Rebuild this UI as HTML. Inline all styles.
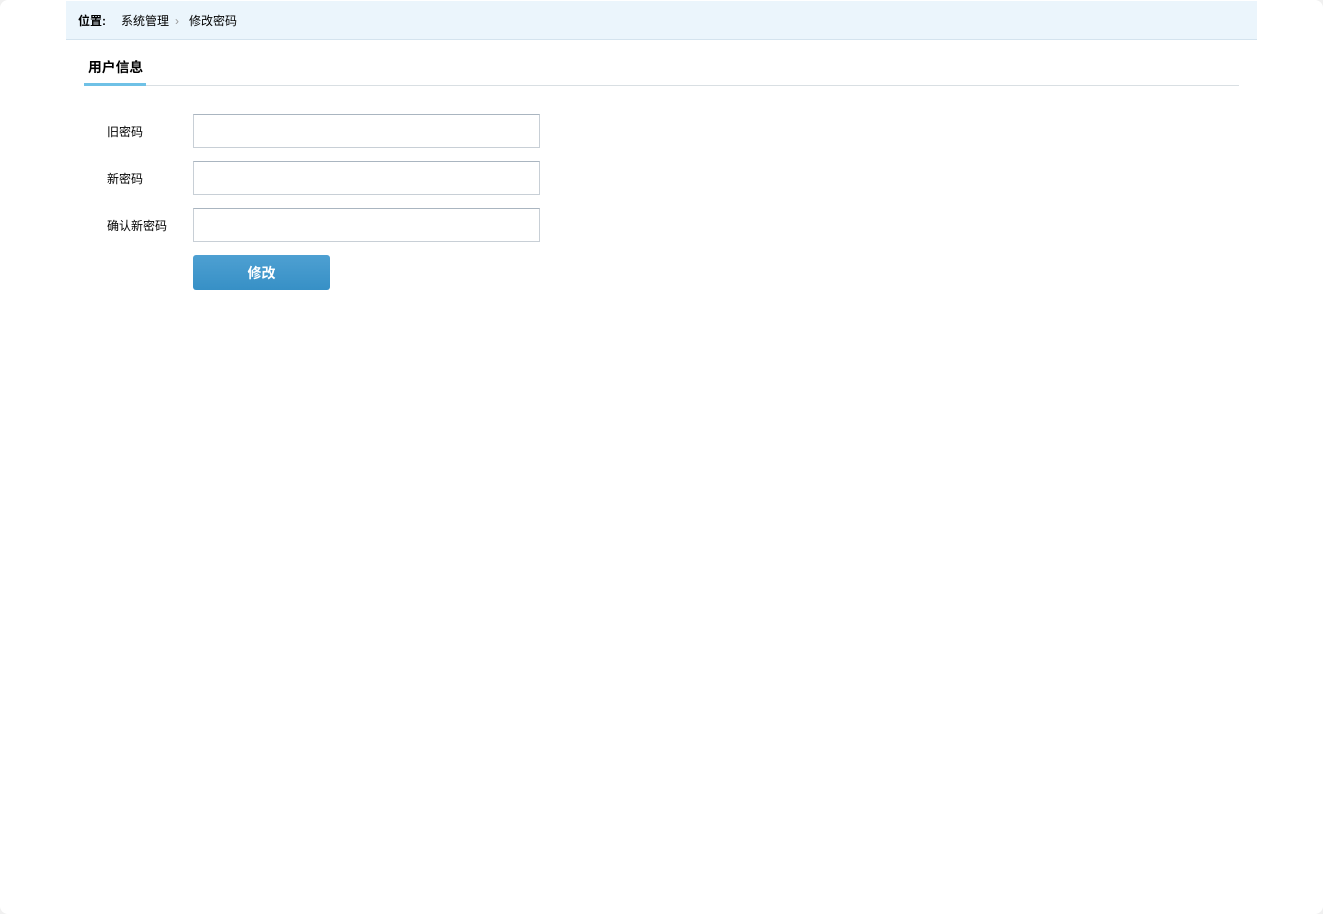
<!DOCTYPE html>
<html><head><meta charset="utf-8"><style>
html,body{margin:0;padding:0;background:#f0f0f0;}
body{width:1323px;height:914px;overflow:hidden;font-family:"Liberation Sans","Noto Sans CJK SC",sans-serif;font-size:12px;color:#000;}
.page{position:absolute;left:0;top:0;width:1323px;height:914px;background:#fff;border-radius:8px;}
.bc{position:absolute;left:66px;top:1px;width:1191px;height:38px;background:#ebf5fc;border-bottom:1px solid #d4e3ee;}
.bc span{position:absolute;top:13px;line-height:14px;}
.tab{position:absolute;left:84px;top:85px;width:1155px;height:1px;background:#d9dfe3;}
.tabt{position:absolute;left:88px;top:60px;font-weight:bold;font-size:13.8px;line-height:16px;}
.tabu{position:absolute;left:84px;top:83px;width:62px;height:3px;background:#6fc1e6;}
.lbl{position:absolute;left:107px;line-height:14px;}
.inp{position:absolute;left:193px;width:345px;height:32px;border:1px solid #c8cfd6;border-top-color:#aab5c0;background:#fff;}
.btn{position:absolute;left:193px;top:255px;width:137px;height:35px;border-radius:3px;background:linear-gradient(#4ea0d2,#3790c6);color:#fff;font-weight:bold;font-size:14px;text-align:center;line-height:36px;}
</style></head><body><div class="page">
<div class="bc"><span style="left:12px;font-weight:bold">位置:</span><span style="left:55px">系统管理</span><span style="left:109px;color:#999">›</span><span style="left:123px">修改密码</span></div>
<div class="tabt">用户信息</div><div class="tab"></div><div class="tabu"></div>
<div class="lbl" style="top:125px">旧密码</div><div class="inp" style="top:114px"></div>
<div class="lbl" style="top:172px">新密码</div><div class="inp" style="top:161px"></div>
<div class="lbl" style="top:219px">确认新密码</div><div class="inp" style="top:208px"></div>
<div class="btn">修改</div>
</div></body></html>
